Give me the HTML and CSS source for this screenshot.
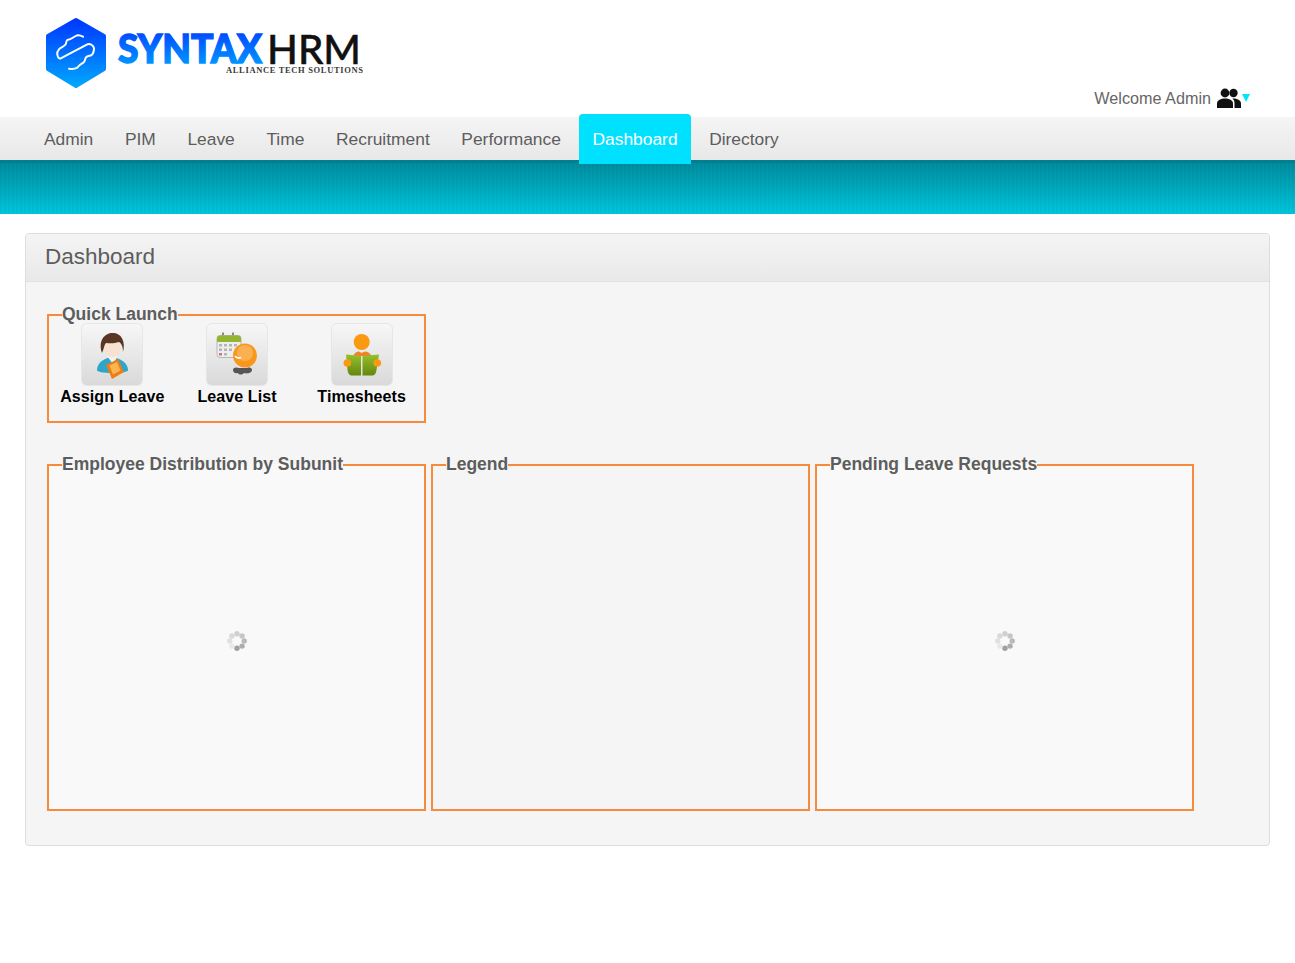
FILE: index.html
```html
<!DOCTYPE html>
<html>
<head>
	<meta charset="utf-8">
	<title>Dashboard</title>
	<link rel="stylesheet" href="styles.css">
</head>
<body>
	<div class="header">
		<svg class="logo" width="340" height="90" viewBox="40 10 340 90">
			<defs>
				<linearGradient id="blue" x1="0" y1="0" x2="0" y2="1">
					<stop offset="0" stop-color="#0038ff"/>
					<stop offset="1" stop-color="#00a6ff"/>
				</linearGradient>
			</defs>
			<polygon points="76,20 104,36 104,69 76,86 48,69 48,36" fill="url(#blue)" stroke="url(#blue)" stroke-width="4" stroke-linejoin="round"/>
			<path class="logo-s" d="M83 36.700C80 35 77 35 75.700 36C73 37.500 71 39.500 67.300 40C66 41 66.500 43 65.700 44.300C64 47 60.500 47 59 49.300C57.500 51 57 53 57.300 54.300C57.500 57 59 59 60.700 58.300L87.300 44.300C90 43 93.500 45.500 94 48.300C94 51 93 54 91.300 55.300C89.500 56 86.500 56 85.700 57.700C85 60 85 61.500 83.300 62.700C81 64 79 65.500 77.300 67.700C75 69 72 69.300 69 68.700"/>
			<text class="logo-syntax" x="118" y="63" textLength="144" lengthAdjust="spacingAndGlyphs" fill="url(#blue)" stroke="url(#blue)">SYNTAX</text>
			<text class="logo-hrm" x="267" y="64" textLength="94" lengthAdjust="spacingAndGlyphs">HRM</text>
			<text class="logo-tag" x="226" y="73" textLength="137">ALLIANCE TECH SOLUTIONS</text>
		</svg>
		<div class="welcome">
			<span>Welcome Admin</span>
			<svg class="people" width="24" height="20" viewBox="0 0 24 20">
				<circle cx="8" cy="5" r="4.400"/>
				<circle cx="16.500" cy="5" r="4.200"/>
				<path d="M0 20V15.500C0 12 4 10.500 8 10.500C12 10.500 16 12 16 15.500V20Z"/>
				<path d="M17.500 20V15C17.500 13 16.500 11.500 15.200 10.600C19 10.200 24 11.800 24 15.500V20Z"/>
			</svg>
			<span class="caret"></span>
		</div>
	</div>

	<ul class="nav">
		<li>Admin</li>
		<li>PIM</li>
		<li>Leave</li>
		<li>Time</li>
		<li>Recruitment</li>
		<li>Performance</li>
		<li class="current">Dashboard</li>
		<li>Directory</li>
	</ul>
	<div class="band"></div>

	<div class="panel">
		<div class="panel-head">Dashboard</div>
		<div class="panel-body">
			<fieldset class="box quick">
				<legend>Quick Launch</legend>
				<div class="launch">
					<div class="launch-item">
						<div class="launch-icon">
							<svg width="46" height="52" viewBox="0 0 46 52">
								<path d="M8 41C8 34 15 29 23 28C31 29 39 34 39 41C39 43 33 44 23 44C14 44 8 43 8 41Z" fill="#2ea6cc"/>
								<path d="M18 27L29 27L24 35Z" fill="#f2f2f2"/>
								<ellipse cx="23.300" cy="18.500" rx="8.500" ry="10" fill="#f7e2d2"/>
								<path d="M13 24C9 12 15 4 24 4C32 4 37 12 34 23C34 17 32 14 30 13C24 15 19 14 17 14C15 16 15 20 13 24Z" fill="#5a3524"/>
								<polygon points="17,36 29,30 35,43 23,50" fill="#ee7d14"/>
								<polygon points="20.500,36.500 28,33 31.500,41.500 24,45.500" fill="#fbb552"/>
							</svg>
						</div>
						<div class="launch-label">Assign Leave</div>
					</div>
					<div class="launch-item">
						<div class="launch-icon">
							<svg width="46" height="52" viewBox="0 0 46 52">
								<path d="M9 3.500V8M19 3.500V8" stroke="#888" stroke-width="2"/>
								<rect x="3" y="6.500" width="24" height="22" rx="3" fill="#eeeeee" stroke="#aaa" stroke-width="0.800"/>
								<path d="M3 13V9.500C3 7.500 4 6.500 6 6.500H24C26 6.500 27 7.500 27 9.500V13Z" fill="#93b531"/>
								<g fill="#b5b5b5">
									<rect x="5" y="15" width="3" height="2.500"/><rect x="10" y="15" width="3" height="2.500"/><rect x="15" y="15" width="3" height="2.500"/><rect x="20" y="15" width="3" height="2.500"/>
									<rect x="5" y="19.500" width="3" height="2.500"/><rect x="10" y="19.500" width="3" height="2.500"/><rect x="15" y="19.500" width="3" height="2.500"/>
									<rect x="5" y="24" width="3" height="2.500" fill="#c77"/><rect x="10" y="24" width="3" height="2.500"/>
								</g>
								<path d="M19 41C19 38 23 38 25 39H33C36 38 38 39 38 41C38 44 33 45 30 44C28 46 25 46 24 44C21 45 19 43 19 41Z" fill="#555"/>
								<circle cx="31" cy="26.500" r="12" fill="#f8971c"/>
								<circle cx="31" cy="24" r="8" fill="#fbb052"/>
								<path d="M21 27C23 29.500 25 29.500 27 28.500" fill="none" stroke="#fff" stroke-width="1.600"/>
							</svg>
						</div>
						<div class="launch-label">Leave List</div>
					</div>
					<div class="launch-item">
						<div class="launch-icon">
							<svg width="46" height="52" viewBox="0 0 46 52">
								<defs>
									<linearGradient id="book" x1="0" y1="0" x2="0" y2="1">
										<stop offset="0" stop-color="#94c22a"/>
										<stop offset="1" stop-color="#64860f"/>
									</linearGradient>
								</defs>
								<circle cx="22.700" cy="13" r="8" fill="#fb9a12"/>
								<path d="M14 27C17 22 20 21.500 22.700 24C26 21.500 29 22 33 27Z" fill="#f2822a"/>
								<path d="M7 25.500L22 27V46.500H13C10 46.500 9 44 8.500 41Z" fill="url(#book)"/>
								<path d="M40 25.500L23.500 27V46.500H33C36 46.500 37 44 37.500 41Z" fill="url(#book)"/>
								<circle cx="8.300" cy="34" r="3.800" fill="#fb9a12"/>
								<circle cx="38.300" cy="34" r="3.800" fill="#fb9a12"/>
							</svg>
						</div>
						<div class="launch-label">Timesheets</div>
					</div>
				</div>
			</fieldset>

			<div class="widgets">
				<fieldset class="box light">
					<legend>Employee Distribution by Subunit</legend>
					<div class="widget-body">
						<svg class="spinner" width="20" height="20" viewBox="0 0 20 20">
							<circle cx="10" cy="2.800" r="2.700" fill="#cfcfcf"/>
							<circle cx="15.100" cy="4.900" r="2.700" fill="#c6c6c6"/>
							<circle cx="17.200" cy="10" r="2.700" fill="#bababa"/>
							<circle cx="15.100" cy="15.100" r="2.700" fill="#adadad"/>
							<circle cx="10" cy="17.200" r="2.700" fill="#a0a0a0"/>
							<circle cx="4.900" cy="15.100" r="2.700" fill="#e8e8e8"/>
							<circle cx="2.800" cy="10" r="2.700" fill="#e0e0e0"/>
							<circle cx="4.900" cy="4.900" r="2.700" fill="#d8d8d8"/>
						</svg>
					</div>
				</fieldset>
				<fieldset class="box">
					<legend>Legend</legend>
					<div class="widget-body"></div>
				</fieldset>
				<fieldset class="box light">
					<legend>Pending Leave Requests</legend>
					<div class="widget-body">
						<svg class="spinner" width="20" height="20" viewBox="0 0 20 20">
							<circle cx="10" cy="2.800" r="2.700" fill="#cfcfcf"/>
							<circle cx="15.100" cy="4.900" r="2.700" fill="#c6c6c6"/>
							<circle cx="17.200" cy="10" r="2.700" fill="#bababa"/>
							<circle cx="15.100" cy="15.100" r="2.700" fill="#adadad"/>
							<circle cx="10" cy="17.200" r="2.700" fill="#a0a0a0"/>
							<circle cx="4.900" cy="15.100" r="2.700" fill="#e8e8e8"/>
							<circle cx="2.800" cy="10" r="2.700" fill="#e0e0e0"/>
							<circle cx="4.900" cy="4.900" r="2.700" fill="#d8d8d8"/>
						</svg>
					</div>
				</fieldset>
			</div>
		</div>
	</div>
</body>
</html>
```

FILE: styles.css
```css
*{
	margin: 0;
	padding: 0;
	box-sizing: border-box;
}
body{
	background: #fff;
	font-family: "Liberation Sans", Arial, sans-serif;
	color: #5d5d5d;
}
li{
	list-style: none;
}

/* header */
.header{
	height: 117px;
	padding: 10px 45px 0 40px;
	display: flex;
	justify-content: space-between;
	align-items: flex-start;
}
.logo{
	display: block;
}
.logo-s{
	fill: none;
	stroke: #fff;
	stroke-width: 2;
	stroke-linecap: round;
	stroke-linejoin: round;
}
.logo-syntax{
	font-family: Lato, sans-serif;
	font-weight: 900;
	font-size: 39px;
	stroke-width: 1.400;
}
.logo-hrm{
	font-family: Lato, sans-serif;
	font-weight: 500;
	font-size: 40px;
	fill: #111;
	stroke: #111;
	stroke-width: 0.500;
}
.logo-tag{
	font-family: "Liberation Serif", serif;
	font-weight: bold;
	font-size: 8.500px;
	fill: #3a3a3a;
}
.welcome{
	display: flex;
	align-items: center;
	margin-top: 76px;
	height: 24px;
	font-size: 16.200px;
	color: #666;
}
.people{
	margin-left: 6px;
	fill: #111;
}
.caret{
	width: 0;
	height: 0;
	margin: 0 0 0 1px;
	border-top: 8px solid #00e5ff;
	border-left: 4px solid transparent;
	border-right: 4px solid transparent;
}

/* menu */
.nav{
	height: 43px;
	padding-left: 31px;
	display: flex;
	gap: 5.600px;
	background: linear-gradient(#f5f5f5, #e8e8e8);
}
.nav li{
	padding: 0 13px;
	font-size: 17.400px;
	line-height: 45px;
	color: #5d5d5d;
}
.nav .current{
	margin: -3px 0 -4px;
	line-height: 50px;
	height: 50px;
	color: #fff;
	background: #00e1ff;
	border-radius: 4px 4px 0 0;
}
.band{
	height: 54px;
	border-top: 3px solid #00808f;
	background:
		repeating-linear-gradient(90deg, rgba(0,0,0,0.03) 0, rgba(0,0,0,0.03) 2px, transparent 2px, transparent 4px),
		linear-gradient(#008c9e, #00c6dd);
}

/* panel */
.panel{
	margin: 19px 25px 0;
	height: 613px;
	background: #f5f5f5;
	border: 1px solid #ddd;
	border-radius: 4px;
}
.panel-head{
	height: 48px;
	padding-left: 19px;
	font-size: 22.500px;
	line-height: 46px;
	color: #5d5d5d;
	background: linear-gradient(#f4f4f4, #e9e9e9);
	border-bottom: 1px solid #e2e2e2;
	border-radius: 3px 3px 0 0;
}
.panel-body{
	padding: 22px 0 0 21px;
}

/* orange boxes */
.box{
	width: 379px;
	min-width: 0;
	border: 2px solid #f68b3d;
}
.box legend{
	margin-left: 13px;
	padding-bottom: 2px;
	font-size: 17.500px;
	font-weight: bold;
	line-height: 20px;
	color: #5d5d5d;
}
.light{
	background: #f9f9f9;
}
.quick{
	height: 119px;
}
.launch{
	display: flex;
	padding-left: 1px;
}
.launch-item{
	width: 125px;
	text-align: center;
}
.launch-icon{
	width: 62px;
	height: 63px;
	margin: -3px auto 0;
	display: flex;
	align-items: center;
	justify-content: center;
	background: linear-gradient(#f7f7f7, #d9d9d9);
	border: 1px solid #e6e6e2;
	border-radius: 6px;
}
.launch-label{
	margin-top: 1px;
	font-size: 16px;
	font-weight: bold;
	line-height: 20px;
	letter-spacing: 0.100px;
	color: #000;
}
.widgets{
	display: flex;
	gap: 5px;
	margin-top: 31px;
}
.widget-body{
	height: 333px;
	padding-bottom: 4px;
	display: flex;
	align-items: center;
	justify-content: center;
}
```
